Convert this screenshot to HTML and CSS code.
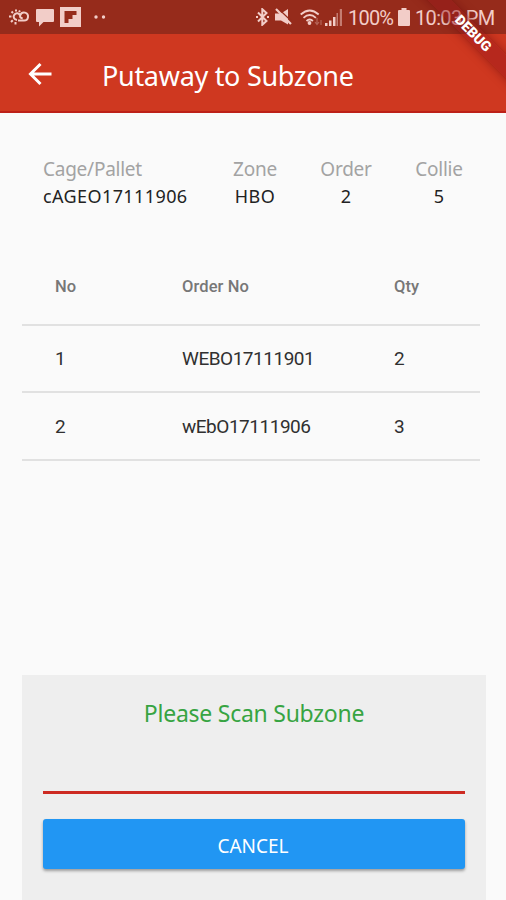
FILE: index.html
```html
<!DOCTYPE html>
<html lang="en">
<head>
<meta charset="utf-8">
<title>Putaway to Subzone</title>
<link rel="stylesheet" href="styles.css">
</head>
<body>
<div class="screen">
  <div class="statusbar">
    <div class="notifications">
      <svg width="21" height="20" viewBox="0 0 21 20" fill="none" stroke="currentColor" stroke-width="2"><path d="M8 13C4.800 12.500 3.800 9.500 5.500 7.500s4.500-1.500 5.500.8M9 13.500h6a4 4 0 1 0-3.700-5.500c-.8 2.600.7 3.200 2.400 3.200"/><path d="M7 2.500v2M2.500 4.500l1.500 1.500M0 9.500h2.500M2 15l1.800-1.800M6.500 15v2.500M11 3.500 10 5"/></svg>
      <svg width="18" height="19" viewBox="0 0 18 19"><path fill="currentColor" d="M1 1h16q1 0 1 1v11q0 1-1 1H7.500L3 18.500V14H1q-1 0-1-1V2q0-1 1-1z"/></svg>
      <svg width="21" height="20" viewBox="0 0 21 20"><path fill="currentColor" fill-rule="evenodd" d="M0 0h21v20H0zM4.500 4v12h4v-4h4V8h4V4z"/></svg>
      <svg class="more" width="12" height="4" viewBox="0 0 12 4" fill="currentColor"><circle cx="2" cy="2" r="1.700"/><circle cx="9.500" cy="2" r="1.700"/></svg>
    </div>
    <div class="system">
      <svg class="bluetooth" width="13" height="18" viewBox="0 0 13 18" fill="none" stroke="currentColor" stroke-width="2"><path d="m2 4.500 8.500 8.500-4.200 3.800V1.200L10.500 5 2 13.500"/><path d="M0 9h2M11 9h2"/></svg>
      <svg class="mute" width="17" height="18" viewBox="0 0 17 18"><path fill="currentColor" d="M0 5.500h6L13 1v15.500L6 12.500H0z"/><path d="M2-.5 17.500 14" stroke="#962b1b" stroke-width="1.300"/><path d="M1 1 16 16" stroke="currentColor" stroke-width="2.200"/></svg>
      <svg class="wifi" width="22" height="17" viewBox="0 0 22 17" fill="none" stroke="currentColor" stroke-width="1.800"><path d="M.7 5.500q9-8 18 0M3.500 8.800q6.200-5.500 12.400 0M6.500 12q3.200-3 6.400 0"/><circle cx="9.500" cy="14" r="1" fill="currentColor"/><path d="M17 9v6m-2-2 2 2.500 2-2.500m2-2v5" stroke-width="1.200" opacity=".35"/></svg>
      <svg class="signal" width="17" height="17" viewBox="0 0 17 17" fill="currentColor"><path d="M0 14h2.500v3H0zM4 11.500h2.500V17H4zM8 8h2.500v9H8z"/><path opacity=".5" d="M11.500 4H13v13h-1.500zM14.800 0H17v17h-2.200z"/></svg>
      <span class="percent">100%</span>
      <svg class="battery" width="12" height="18" viewBox="0 0 12 18"><path fill="currentColor" d="M3.500 0h5v2H11q1 0 1 1v14q0 1-1 1H1q-1 0-1-1V3q0-1 1-1h2.500z"/></svg>
      <span class="clock">10:03 PM</span>
    </div>
  </div>
  <header class="appbar">
    <svg class="back" width="24" height="24" viewBox="0 0 24 24" fill="none" stroke="currentColor" stroke-width="3"><path d="M12.500 2 2.500 12l10 10M2.500 12h21"/></svg>
    <h1 class="title">Putaway to Subzone</h1>
  </header>
  <div class="ribbon"><span>DEBUG</span></div>

  <main class="content">
    <section class="summary">
      <div class="cage"><span class="label">Cage/Pallet</span><span class="value">cAGEO17111906</span></div>
      <div class="zone"><span class="label">Zone</span><span class="value">HBO</span></div>
      <div class="order"><span class="label">Order</span><span class="value">2</span></div>
      <div class="collie"><span class="label">Collie</span><span class="value">5</span></div>
    </section>

    <section class="orders">
      <div class="row head"><span>No</span><span>Order No</span><span>Qty</span></div>
      <div class="row"><span>1</span><span>WEBO17111901</span><span>2</span></div>
      <div class="row last"><span>2</span><span>wEbO17111906</span><span>3</span></div>
    </section>

    <section class="scan">
      <div class="prompt">Please Scan Subzone</div>
      <div class="field"></div>
      <button class="cancel">CANCEL</button>
    </section>
  </main>
</div>
</body>
</html>
```

FILE: styles.css
```css
* { box-sizing: border-box; }

body {
  margin: 0;
  font-family: "Noto Sans", "Open Sans", sans-serif;
}

.screen {
  position: relative;
  display: flex;
  flex-direction: column;
  width: 506px;
  height: 900px;
  overflow: hidden;
  background: #fafafa;
}

.statusbar {
  display: flex;
  justify-content: space-between;
  height: 34px;
  padding: 0 11px 0 9px;
  background: #962b1b;
  color: #f2cdc8;
}

.notifications,
.system {
  display: flex;
  align-items: center;
}

.notifications { gap: 6px; }
.more { margin-left: 7px; }
.system { font: 20px/36px Roboto, sans-serif; }
.mute { margin-left: 6px; }
.wifi { margin-left: 8px; }
.signal { margin-left: 3px; }
.percent { width: 45px; margin-left: 6px; padding-top: 1px; letter-spacing: -0.8px; }
.battery { margin-left: 5px; }
.clock { width: 80px; margin-left: 5px; padding-top: 1px; letter-spacing: -0.65px; white-space: nowrap; }

.appbar {
  display: flex;
  align-items: center;
  height: 79px;
  padding-left: 28px;
  background: #cf3820;
  border-bottom: 2px solid #bd2018;
  color: #fff;
}

.back { margin-top: 2px; }

.title {
  margin: 6px 0 0 50px;
  font-size: 27px;
  font-weight: 400;
  line-height: 36px;
  letter-spacing: -0.3px;
  white-space: nowrap;
}

.ribbon {
  position: absolute;
  top: 25px;
  left: 403px;
  width: 140px;
  height: 17px;
  background: rgba(150, 22, 26, 0.45);
  box-shadow: 0 0 10px rgba(110, 12, 12, 0.6);
  color: #fff;
  font: 900 14px/17px Roboto, sans-serif;
  text-align: center;
  transform: rotate(45deg);
}

.content {
  display: flex;
  flex: 1;
  flex-direction: column;
  padding: 43px 20px 0 22px;
}

.summary {
  display: flex;
  height: 90px;
  padding-left: 21px;
  font-size: 19px;
  line-height: 27px;
  white-space: nowrap;
}

.summary > div {
  display: flex;
  flex-direction: column;
  align-items: center;
}

.summary .cage { width: 145px; align-items: flex-start; }
.zone { width: 46px; margin-left: 44px; }
.order { width: 52px; margin-left: 42px; }
.collie { width: 50px; margin-left: 42px; }
.label { color: #a3a3a3; letter-spacing: -0.25px; }
.value { color: #222; font-size: 18px; letter-spacing: 0.4px; }

.orders {
  width: 458px;
  font: 19px/66px Roboto, sans-serif;
  letter-spacing: -0.48px;
  color: #303030;
}

.row {
  display: grid;
  grid-template-columns: 127px 212px 1fr;
  height: 67px;
  padding-left: 33px;
  border-bottom: 2px solid #e1e1e1;
}

.row.last { height: 68px; line-height: 67px; }

.row.head {
  height: 80px;
  font-size: 16.5px;
  font-weight: 500;
  line-height: 81px;
  letter-spacing: 0.1px;
  color: #777;
}

.scan {
  display: flex;
  flex-direction: column;
  height: 225px;
  margin-top: auto;
  padding: 21px 21px 0;
  background: #eee;
}

.prompt {
  color: #37a442;
  font-size: 23px;
  line-height: 35px;
  letter-spacing: -0.25px;
  text-align: center;
}

.field {
  height: 63px;
  border-bottom: 3px solid #cd2a22;
}

.cancel {
  height: 50px;
  margin-top: 25px;
  padding: 3px 2px 0 0;
  border: 0;
  border-radius: 3px;
  background: #2196f3;
  box-shadow: 0 2px 3px rgba(0, 0, 0, 0.35);
  color: #fff;
  font: 19px/24px "Noto Sans", "Open Sans", sans-serif;
}
```
